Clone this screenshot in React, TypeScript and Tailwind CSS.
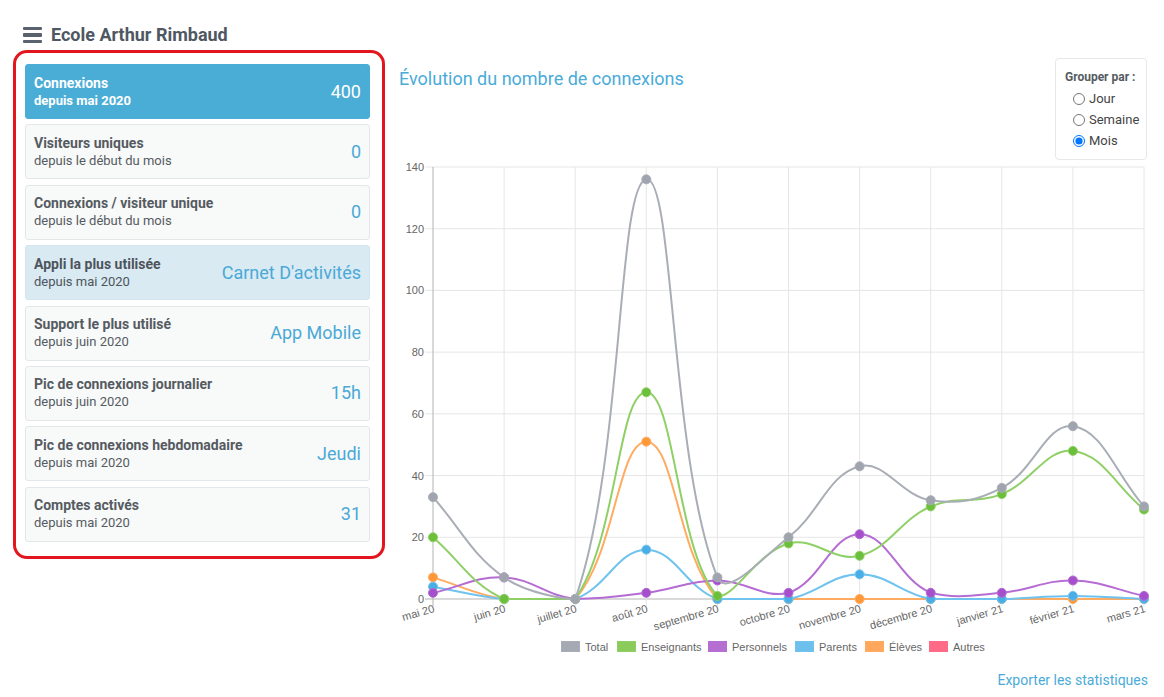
import React from "react";

type Pt = { x: number; y: number };

const CARDS = [
  { title: "Connexions", sub: "depuis mai 2020", value: "400", tone: "primary" },
  { title: "Visiteurs uniques", sub: "depuis le début du mois", value: "0", tone: "plain" },
  { title: "Connexions / visiteur unique", sub: "depuis le début du mois", value: "0", tone: "plain" },
  { title: "Appli la plus utilisée", sub: "depuis mai 2020", value: "Carnet D'activités", tone: "info" },
  { title: "Support le plus utilisé", sub: "depuis juin 2020", value: "App Mobile", tone: "plain" },
  { title: "Pic de connexions journalier", sub: "depuis juin 2020", value: "15h", tone: "plain" },
  { title: "Pic de connexions hebdomadaire", sub: "depuis mai 2020", value: "Jeudi", tone: "plain" },
  { title: "Comptes activés", sub: "depuis mai 2020", value: "31", tone: "plain" },
];

const LABELS = [
  "mai 20",
  "juin 20",
  "juillet 20",
  "août 20",
  "septembre 20",
  "octobre 20",
  "novembre 20",
  "décembre 20",
  "janvier 21",
  "février 21",
  "mars 21",
];

// Autres has no data, it only shows in the legend
const DATASETS = [
  { name: "Total", line: "#a9adb6", point: "#a0a4ae", box: "#a5a9b3", data: [33, 7, 0, 136, 7, 20, 43, 32, 36, 56, 30] },
  { name: "Enseignants", line: "#8fd066", point: "#6cbf3a", box: "#8bcb5c", data: [20, 0, 0, 67, 1, 18, 14, 30, 34, 48, 29] },
  { name: "Personnels", line: "#b56dd3", point: "#a64fcc", box: "#b56fd2", data: [2, 7, 0, 2, 6, 2, 21, 2, 2, 6, 1] },
  { name: "Parents", line: "#70c3ee", point: "#4aaee6", box: "#6dc0eb", data: [4, 0, 0, 16, 0, 0, 8, 0, 0, 1, 0] },
  { name: "Élèves", line: "#ffab62", point: "#ff9838", box: "#ffa75c", data: [7, 0, 0, 51, 0, 0, 0, 0, 0, 0, 0] },
  { name: "Autres", line: "#ff6b89", point: "#ff5c7e", box: "#ff6a87", data: [] as number[] },
];

// chart area, in svg coordinates
const AREA = { left: 38, right: 749, top: 7, bottom: 439 };
const MAX = 140;
const px = (i: number) => AREA.left + (i * (AREA.right - AREA.left)) / (LABELS.length - 1);
const py = (v: number) => AREA.bottom - (v * (AREA.bottom - AREA.top)) / MAX;

const clamp = (v: number, lo: number, hi: number) => Math.max(lo, Math.min(hi, v));

// same bezier as chart.js (tension 0.4)
function curve(pts: Pt[], t = 0.4) {
  const cps = pts.map((cur, i) => {
    const prev = pts[i - 1] || cur;
    const next = pts[i + 1] || cur;
    const d01 = Math.hypot(cur.x - prev.x, cur.y - prev.y);
    const d12 = Math.hypot(next.x - cur.x, next.y - cur.y);
    let s01 = d01 / (d01 + d12);
    let s12 = d12 / (d01 + d12);
    if (isNaN(s01)) s01 = 0;
    if (isNaN(s12)) s12 = 0;
    const fa = t * s01;
    const fb = t * s12;
    return {
      p: {
        x: clamp(cur.x - fa * (next.x - prev.x), AREA.left, AREA.right),
        y: clamp(cur.y - fa * (next.y - prev.y), AREA.top, AREA.bottom),
      },
      n: {
        x: clamp(cur.x + fb * (next.x - prev.x), AREA.left, AREA.right),
        y: clamp(cur.y + fb * (next.y - prev.y), AREA.top, AREA.bottom),
      },
    };
  });
  let d = `M${pts[0].x},${pts[0].y}`;
  for (let i = 1; i < pts.length; i++) {
    const a = cps[i - 1].n;
    const b = cps[i].p;
    d += ` C${a.x},${a.y} ${b.x},${b.y} ${pts[i].x},${pts[i].y}`;
  }
  return d;
}

const LEGEND_X = [166, 222, 313, 400, 470, 534];

function Chart() {
  const ticks = [0, 20, 40, 60, 80, 100, 120, 140];
  return (
    <svg width="769" height="500" className="block" style={{ fontFamily: "'Liberation Sans', Arial, sans-serif" }}>
      {/* grid */}
      {ticks.map((v) => (
        <line
          key={v}
          x1={30}
          x2={AREA.right}
          y1={py(v)}
          y2={py(v)}
          stroke={v === 0 ? "#b3b3b3" : "#e6e6e6"}
          strokeWidth="1"
        />
      ))}
      {LABELS.map((l, i) => (
        <line
          key={l}
          x1={px(i)}
          x2={px(i)}
          y1={AREA.top}
          y2={AREA.bottom + 7}
          stroke={i === 0 ? "#b3b3b3" : "#e6e6e6"}
          strokeWidth="1"
        />
      ))}
      {ticks.map((v) => (
        <text key={v} x={29} y={py(v)} textAnchor="end" dominantBaseline="central" fontSize="11" fill="#666">
          {v}
        </text>
      ))}
      {LABELS.map((l, i) => (
        <text
          key={l}
          transform={`translate(${px(i) + 1},${AREA.bottom + 9}) rotate(-16)`}
          textAnchor="end"
          dominantBaseline="central"
          fontSize="11"
          fill="#666"
        >
          {l}
        </text>
      ))}

      {/* datasets, last one drawn first */}
      {[...DATASETS].reverse().filter((ds) => ds.data.length > 0).map((ds) => {
        const pts = ds.data.map((v, i) => ({ x: px(i), y: py(v) }));
        return (
          <g key={ds.name}>
            <path d={curve(pts)} fill="none" stroke={ds.line} strokeWidth="2" />
            {pts.map((p, i) => (
              <circle key={i} cx={p.x} cy={p.y} r="4.5" fill={ds.point} stroke={ds.line} strokeWidth="1" />
            ))}
          </g>
        );
      })}

      {/* legend */}
      {DATASETS.map((ds, i) => (
        <g key={ds.name}>
          <rect x={LEGEND_X[i] + 0.5} y={481.5} width="18" height="10" fill={ds.box} stroke={ds.line} strokeWidth="1" />
          <text x={LEGEND_X[i] + 24} y={487} dominantBaseline="central" fontSize="11" fill="#666">
            {ds.name}
          </text>
        </g>
      ))}
    </svg>
  );
}

function StatCard({ title, sub, value, tone }: { title: string; sub: string; value: string; tone: string }) {
  const box =
    tone === "primary"
      ? "bg-[#4aadd6] border-[#4aadd6] text-white"
      : tone === "info"
      ? "bg-[#d9eaf3] border-[#d3e5ee] text-[#4d545b]"
      : "bg-[#f8f9f9] border-[#e4e7e9] text-[#555b61]";
  return (
    <div className={`flex items-center justify-between h-[55px] px-[8px] border rounded-[3px] ${box}`}>
      <div>
        <div className="text-[14px] font-bold leading-[17px]">{title}</div>
        <div className={`text-[13px] leading-[17px] ${tone === "primary" ? "font-bold" : ""}`}>{sub}</div>
      </div>
      <div className={`text-[18px] leading-[22px] ${tone === "primary" ? "text-white" : "text-[#4aa9d6]"}`}>{value}</div>
    </div>
  );
}

export default function App() {
  return (
    <div className="w-[1164px] h-[697px] bg-white overflow-hidden font-['Roboto','Liberation_Sans',sans-serif]">
      <header className="flex items-center gap-[9px] pl-[23px] pt-[24px] h-[46px]">
        <div className="flex flex-col gap-[3px] w-[19px]">
          <span className="h-[3.5px] bg-[#5a6270] rounded-[1px]" />
          <span className="h-[3.5px] bg-[#5a6270] rounded-[1px]" />
          <span className="h-[3.5px] bg-[#5a6270] rounded-[1px]" />
        </div>
        <h1 className="text-[18px] font-bold leading-[22px] text-[#4f5763]">Ecole Arthur Rimbaud</h1>
      </header>

      <div className="flex items-start mt-[4px]">
        <div className="ml-[13px] w-[372px] border-[3px] border-[#e3161f] rounded-[14px] pt-[11px] pb-[14px] pl-[9px] pr-[12px] flex flex-col gap-[5.4px]">
          {CARDS.map((c) => (
            <StatCard key={c.title} {...c} />
          ))}
        </div>

        <div className="ml-[10px] flex-1 flex flex-col">
          <div className="flex justify-between h-[110px]">
            <h2 className="pl-[4px] mt-[17px] text-[18px] leading-[24px] text-[#4aabd8]">Évolution du nombre de connexions</h2>
            <div className="mt-[8px] mr-[17px] w-[92px] h-[102px] border border-[#e6e8ea] rounded-[4px] pl-[9px] pt-[10px]">
              <div className="text-[12px] font-bold leading-[16px] text-[#555b61]">Grouper par :</div>
              <div className="mt-[3px] flex flex-col">
                {["Jour", "Semaine", "Mois"].map((o) => (
                  <label key={o} className="flex items-center gap-[4px] h-[21px] pl-[8px] text-[13px] text-[#444]">
                    <input type="radio" name="group" defaultChecked={o === "Mois"} className="m-0 w-[12px] h-[12px]" />
                    <span>{o}</span>
                  </label>
                ))}
              </div>
            </div>
          </div>

          <Chart />

          <a className="mt-[10px] self-end mr-[16px] text-[14px] leading-[20px] text-[#4aabd8]">Exporter les statistiques</a>
        </div>
      </div>
    </div>
  );
}
